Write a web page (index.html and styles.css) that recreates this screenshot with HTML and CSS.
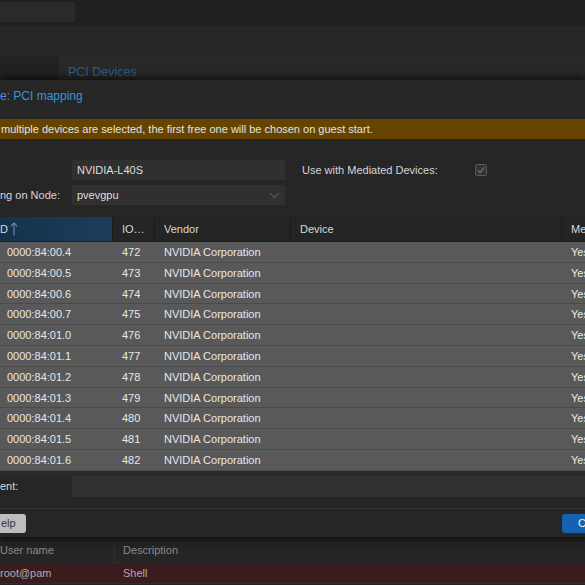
FILE: index.html
```html
<!DOCTYPE html>
<html>
<head>
<meta charset="utf-8">
<link rel="stylesheet" href="styles.css">
</head>
<body>
<div class="page">
  <div class="top"><div class="top-box"></div></div>
  <div class="band"></div>
  <div class="tabbar">
    <div class="tab-gap"></div>
    <div class="tab">PCI Devices</div>
  </div>

  <div class="dialog">
    <div class="dlg-title">e: PCI mapping</div>
    <div class="warn">multiple devices are selected, the first free one will be chosen on guest start.</div>

    <div class="form">
      <div class="frow">
        <div class="flabel"></div>
        <div class="field">NVIDIA-L40S</div>
        <div class="flabel2">Use with Mediated Devices:</div>
        <div class="check">
          <svg width="12" height="12" viewBox="0 0 12 12"><rect x="0.5" y="0.5" width="11" height="11" rx="1" fill="#333" stroke="#5a5a5a"/><path d="M2.8 6.2 L5 8.4 L9.4 3.4" fill="none" stroke="#6e6e6e" stroke-width="1.4"/></svg>
        </div>
      </div>
      <div class="frow frow2">
        <div class="flabel">ng on Node:</div>
        <div class="field select">
          <span>pvevgpu</span>
          <svg class="chev" width="11" height="7" viewBox="0 0 11 7"><path d="M1 1.2 L5.5 5.5 L10 1.2" fill="none" stroke="#555" stroke-width="1.3"/></svg>
        </div>
      </div>
    </div>

    <div class="grid">
      <div class="ghead">
        <div class="hc sorted"><span>D</span><svg class="arrow" width="8" height="14" viewBox="0 0 8 14"><path d="M4 1 V13.5 M0.8 4.4 L4 1 L7.2 4.4" fill="none" stroke="#5f86a8" stroke-width="1.2"/></svg></div>
        <div class="hc">IO…</div>
        <div class="hc">Vendor</div>
        <div class="hc">Device</div>
        <div class="hc">Mediated Devices</div>
      </div>
      <div class="grow"><div class="c c-id">0000:84:00.4</div><div class="c">472</div><div class="c">NVIDIA Corporation</div><div class="c"></div><div class="c">Yes</div></div>
      <div class="grow"><div class="c c-id">0000:84:00.5</div><div class="c">473</div><div class="c">NVIDIA Corporation</div><div class="c"></div><div class="c">Yes</div></div>
      <div class="grow"><div class="c c-id">0000:84:00.6</div><div class="c">474</div><div class="c">NVIDIA Corporation</div><div class="c"></div><div class="c">Yes</div></div>
      <div class="grow"><div class="c c-id">0000:84:00.7</div><div class="c">475</div><div class="c">NVIDIA Corporation</div><div class="c"></div><div class="c">Yes</div></div>
      <div class="grow"><div class="c c-id">0000:84:01.0</div><div class="c">476</div><div class="c">NVIDIA Corporation</div><div class="c"></div><div class="c">Yes</div></div>
      <div class="grow"><div class="c c-id">0000:84:01.1</div><div class="c">477</div><div class="c">NVIDIA Corporation</div><div class="c"></div><div class="c">Yes</div></div>
      <div class="grow"><div class="c c-id">0000:84:01.2</div><div class="c">478</div><div class="c">NVIDIA Corporation</div><div class="c"></div><div class="c">Yes</div></div>
      <div class="grow"><div class="c c-id">0000:84:01.3</div><div class="c">479</div><div class="c">NVIDIA Corporation</div><div class="c"></div><div class="c">Yes</div></div>
      <div class="grow"><div class="c c-id">0000:84:01.4</div><div class="c">480</div><div class="c">NVIDIA Corporation</div><div class="c"></div><div class="c">Yes</div></div>
      <div class="grow"><div class="c c-id">0000:84:01.5</div><div class="c">481</div><div class="c">NVIDIA Corporation</div><div class="c"></div><div class="c">Yes</div></div>
      <div class="grow"><div class="c c-id">0000:84:01.6</div><div class="c">482</div><div class="c">NVIDIA Corporation</div><div class="c"></div><div class="c">Yes</div></div>
    </div>
    <div class="grid-tail"></div>

    <div class="frow comment">
      <div class="flabel">ent:</div>
      <div class="field wide"></div>
    </div>

    <div class="footer">
      <div class="btn help">elp</div>
      <div class="spacer"></div>
      <div class="btn primary">Create</div>
    </div>
  </div>

  <div class="bghead">
    <div class="bc">User name</div>
    <div class="bc bc2">Description</div>
  </div>
  <div class="bgrow">
    <div class="bc">root@pam</div>
    <div class="bc bc2">Shell</div>
  </div>
</div>
</body>
</html>
```

FILE: styles.css
```css
html, body {
  margin: 0;
  padding: 0;
  width: 585px;
  height: 585px;
  overflow: hidden;
  background: #222222;
}

.page {
  width: 585px;
  height: 585px;
  overflow: hidden;
  font-family: "Liberation Sans", Arial, sans-serif;
  font-size: 11px;
  color: #dcdcdc;
}

.top {
  height: 26px;
  background: #212121;
  padding-top: 2px;
  box-sizing: border-box;
}
.top-box {
  width: 75px;
  height: 20px;
  background: #2a2a2a;
}

.band {
  height: 31px;
  background: #262626;
}

.tabbar {
  height: 23px;
  display: flex;
}
.tab-gap {
  width: 59px;
  background: #222222;
}
.tab {
  flex: 1;
  background: #292929;
  color: #2c6290;
  font-size: 12.5px;
  padding-left: 9px;
  padding-top: 7px;
  line-height: 16px;
  box-sizing: border-box;
}

.dialog {
  position: relative;
  z-index: 2;
  height: 457px;
  background: #262626;
  box-shadow: 0 0 9px 2px rgba(0, 0, 0, 0.75);
}

.dlg-title {
  height: 33px;
  line-height: 33px;
  font-size: 12px;
  color: #3b95da;
}

.warn {
  margin-top: 6px;
  height: 20px;
  line-height: 20px;
  background: #664400;
  color: #e2e2e2;
  padding-left: 1px;
  white-space: nowrap;
}

.form {
  padding-top: 21px;
}
.frow {
  display: flex;
  align-items: center;
  height: 20px;
}
.frow2 {
  margin-top: 5px;
}
.flabel {
  width: 72px;
  flex: none;
  color: #d6d6d6;
  white-space: nowrap;
}
.field {
  width: 213px;
  height: 20px;
  flex: none;
  box-sizing: border-box;
  background: #303030;
  padding-left: 5px;
  line-height: 20px;
  color: #dedede;
  display: flex;
  align-items: center;
}
.select {
  justify-content: space-between;
  padding-right: 5px;
}
.chev {
  display: block;
}
.flabel2 {
  margin-left: 17px;
  width: 173px;
  flex: none;
  color: #d6d6d6;
  white-space: nowrap;
}
.check {
  width: 12px;
  height: 12px;
}
.check svg {
  display: block;
}

.grid {
  margin-top: 12px;
}
.ghead {
  display: grid;
  grid-template-columns: 113px 42px 136px 271px 120px;
  height: 25px;
  background: #242424;
  border-bottom: 1px solid #1e1e1e;
  box-sizing: border-box;
}
.hc {
  line-height: 24px;
  padding-left: 9px;
  border-right: 1px solid #1c1c1c;
  white-space: nowrap;
  overflow: hidden;
  color: #dadada;
}
.hc.sorted {
  padding-left: 0;
  display: flex;
  align-items: center;
  gap: 2px;
  background: linear-gradient(to right, #15324c, #1c3d5b);
}
.arrow {
  display: block;
}

.grow {
  display: grid;
  grid-template-columns: 113px 42px 136px 271px 120px;
  height: 20.8px;
  box-sizing: border-box;
  background: #595959;
  border-bottom: 1px solid #4a4a4a;
}
.c {
  padding-left: 9px;
  line-height: 20px;
  white-space: nowrap;
  overflow: hidden;
  color: #e8e8e8;
}
.c.c-id {
  padding-left: 7px;
}

.grid-tail {
  height: 5px;
  background: #2a2a2a;
}

.comment {
  height: 21px;
}
.field.wide {
  flex: 1;
  height: 21px;
  background: #313131;
}

.footer {
  margin-top: 11px;
  border-top: 1px solid #333333;
  height: 29px;
  box-sizing: border-box;
  display: flex;
  align-items: flex-start;
  padding-top: 5px;
}
.spacer {
  flex: 1;
}
.btn {
  height: 19px;
  line-height: 19px;
  border-radius: 3px;
  white-space: nowrap;
}
.help {
  width: 26px;
  background: #bdbdbd;
  color: #333333;
  padding-left: 1px;
  box-sizing: border-box;
  border-radius: 0 3px 3px 0;
}
.primary {
  width: 70px;
  margin-right: -47px;
  flex: none;
  box-sizing: border-box;
  background: #1463b3;
  color: #f2f2f2;
  padding-left: 16px;
  overflow: hidden;
  border-radius: 3px 0 0 3px;
}

.bghead {
  height: 26px;
  display: grid;
  grid-template-columns: 114px 1fr;
  background: #252525;
  box-sizing: border-box;
  border-bottom: 1px solid #2a2a2a;
}
.bghead .bc {
  line-height: 27px;
  color: #8a8a8a;
}
.bghead .bc2 {
  border-left: 1px solid #2e2e2e;
}
.bc2 {
  padding-left: 8px;
}
.bgrow {
  height: 21px;
  display: grid;
  grid-template-columns: 114px 1fr;
  background: #3b1c1e;
  border-bottom: 1px solid #2e2e2e;
  box-sizing: border-box;
}
.bgrow .bc {
  line-height: 20px;
  color: #ababab;
}
.bgrow .bc2 {
  margin-left: 1px;
}
```
